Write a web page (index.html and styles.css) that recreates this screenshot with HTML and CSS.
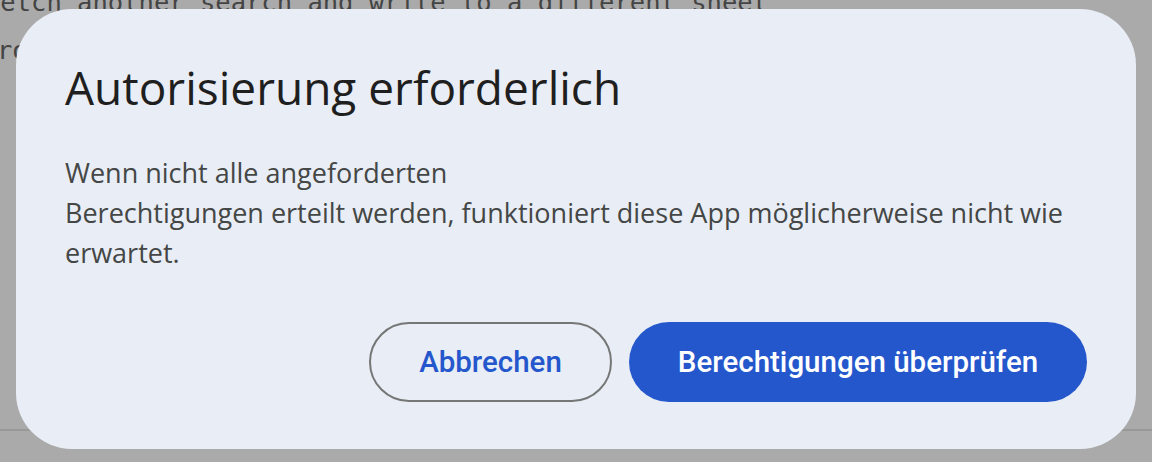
FILE: index.html
```html
<!DOCTYPE html>
<html lang="de">
<head>
<meta charset="utf-8">
<link rel="stylesheet" href="styles.css">
</head>
<body>
<div class="backdrop">
  <div class="bg-line1">Fetch another search and write to a different sheet</div>
  <div class="bg-line2">ro</div>
  <div class="bg-rule"></div>
</div>
<div class="dialog">
  <h1 class="title">Autorisierung erforderlich</h1>
  <p class="body">Wenn nicht alle angeforderten<br>Berechtigungen erteilt werden, funktioniert diese App möglicherweise nicht wie erwartet.</p>
  <div class="actions">
    <button class="btn btn-outline">Abbrechen</button>
    <button class="btn btn-filled">Berechtigungen überprüfen</button>
  </div>
</div>
</body>
</html>
```
FILE: styles.css
```css
html, body {
  margin: 0;
  padding: 0;
  width: 1152px;
  height: 462px;
  overflow: hidden;
  background: #aaaaaa;
}
.backdrop {
  width: 1152px;
  height: 462px;
  font-family: "DejaVu Sans Mono", "Liberation Mono", monospace;
  font-size: 25.5px;
  color: #444444;
}
.bg-line1 {
  height: 48px;
  line-height: 0;
  padding-top: 2px;
  margin-left: -15px;
  white-space: pre;
}
.bg-line2 {
  line-height: 1;
  margin-top: -12px;
  margin-left: -3px;
  white-space: pre;
}
.bg-rule {
  margin-top: 365px;
  height: 2px;
  background: #989898;
}
.dialog {
  position: absolute;
  left: 16px;
  top: 9px;
  width: 1120px;
  height: 440px;
  box-sizing: border-box;
  padding: 52px 49px 0 49px;
  background: #e9edf5;
  border-radius: 56px;
  font-family: "Open Sans", Roboto, sans-serif;
}
.title {
  margin: 0;
  font-size: 46px;
  font-weight: 400;
  line-height: 52px;
  color: #1f1f1f;
}
.body {
  margin: 40px 0 0 0;
  font-size: 27px;
  line-height: 40px;
  color: #444746;
  width: 1022px;
}
.actions {
  display: flex;
  justify-content: flex-end;
  gap: 17px;
  margin-top: 49px;
}
.btn {
  font-family: Roboto, "Open Sans", sans-serif;
  font-size: 29.5px;
  font-weight: 500;
  height: 80px;
  border-radius: 40px;
  padding: 0;
  box-sizing: border-box;
  cursor: pointer;
}
.btn-outline {
  width: 243px;
  background: transparent;
  border: 2px solid #747775;
  color: #2557cc;
}
.btn-filled {
  width: 458px;
  background: #2557cc;
  border: none;
  color: #ffffff;
}
```
